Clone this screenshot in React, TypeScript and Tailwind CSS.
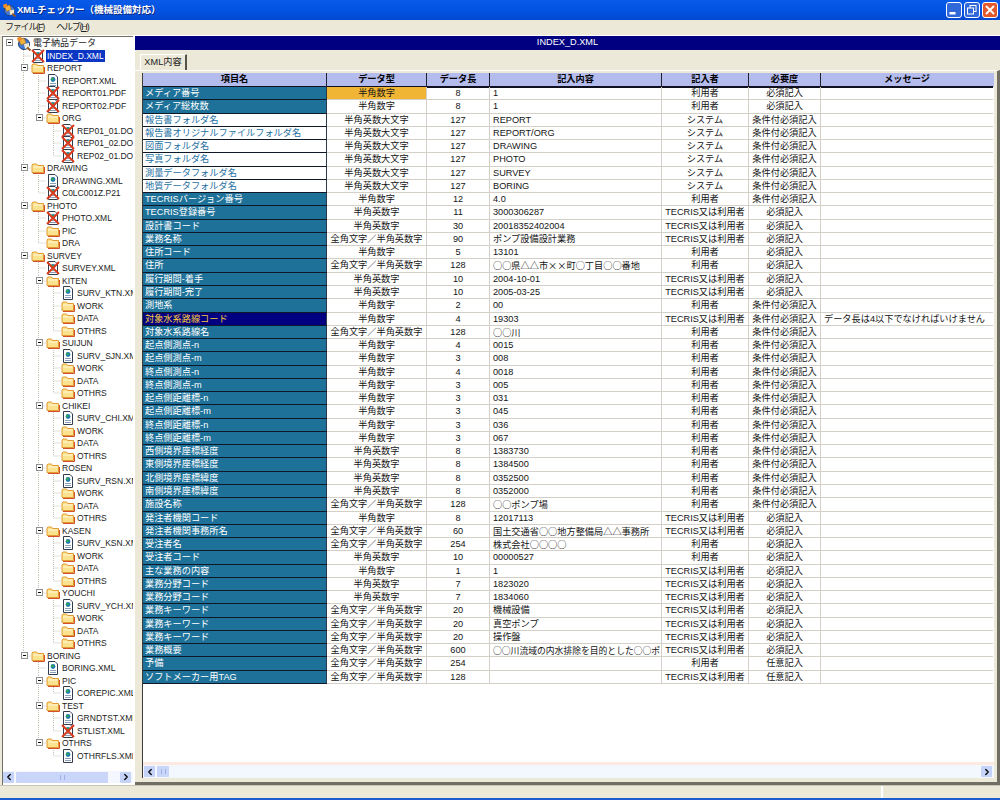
import { ChevronLeft, ChevronRight } from "lucide-react";

const H = "半角数字";
const A = "半角英数字";
const U = "半角英数大文字";
const Z = "全角文字／半角英数字";
const ME = "利用者";
const SYS = "システム";
const TEC = "TECRIS又は利用者";
const REQ = "必須記入";
const CON = "条件付必須記入";
const OPT = "任意記入";

type Row = [string, string, string, string, string, string, string?];

const rows: Row[] = [
  ["メディア番号", H, "8", "1", ME, REQ],
  ["メディア総枚数", H, "8", "1", ME, REQ],
  ["報告書フォルダ名", U, "127", "REPORT", SYS, CON],
  ["報告書オリジナルファイルフォルダ名", U, "127", "REPORT/ORG", SYS, CON],
  ["図面フォルダ名", U, "127", "DRAWING", SYS, CON],
  ["写真フォルダ名", U, "127", "PHOTO", SYS, CON],
  ["測量データフォルダ名", U, "127", "SURVEY", SYS, CON],
  ["地質データフォルダ名", U, "127", "BORING", SYS, CON],
  ["TECRISバージョン番号", H, "12", "4.0", ME, CON],
  ["TECRIS登録番号", A, "11", "3000306287", TEC, REQ],
  ["設計書コード", A, "30", "20018352402004", TEC, REQ],
  ["業務名称", Z, "90", "ポンプ設備設計業務", TEC, REQ],
  ["住所コード", H, "5", "13101", ME, REQ],
  ["住所", Z, "128", "○○県△△市××町○丁目○○番地", ME, REQ],
  ["履行期間-着手", A, "10", "2004-10-01", TEC, REQ],
  ["履行期間-完了", A, "10", "2005-03-25", TEC, REQ],
  ["測地系", H, "2", "00", ME, CON],
  ["対象水系路線コード", H, "4", "19303", TEC, CON, "データ長は4以下でなければいけません"],
  ["対象水系路線名", Z, "128", "○○川", ME, CON],
  ["起点側測点-n", H, "4", "0015", ME, CON],
  ["起点側測点-m", H, "3", "008", ME, CON],
  ["終点側測点-n", H, "4", "0018", ME, CON],
  ["終点側測点-m", H, "3", "005", ME, CON],
  ["起点側距離標-n", H, "3", "031", ME, CON],
  ["起点側距離標-m", H, "3", "045", ME, CON],
  ["終点側距離標-n", H, "3", "036", ME, CON],
  ["終点側距離標-m", H, "3", "067", ME, CON],
  ["西側境界座標経度", A, "8", "1383730", ME, CON],
  ["東側境界座標経度", A, "8", "1384500", ME, CON],
  ["北側境界座標緯度", A, "8", "0352500", ME, CON],
  ["南側境界座標緯度", A, "8", "0352000", ME, CON],
  ["施設名称", Z, "128", "○○ポンプ場", ME, CON],
  ["発注者機関コード", H, "8", "12017113", TEC, REQ],
  ["発注者機関事務所名", Z, "60", "国土交通省○○地方整備局△△事務所", TEC, REQ],
  ["受注者名", Z, "254", "株式会社○○○○", ME, REQ],
  ["受注者コード", A, "10", "00000527", ME, REQ],
  ["主な業務の内容", H, "1", "1", TEC, REQ],
  ["業務分野コード", A, "7", "1823020", TEC, REQ],
  ["業務分野コード", A, "7", "1834060", TEC, REQ],
  ["業務キーワード", Z, "20", "機械設備", TEC, REQ],
  ["業務キーワード", Z, "20", "真空ポンプ", TEC, REQ],
  ["業務キーワード", Z, "20", "操作盤", TEC, REQ],
  ["業務概要", Z, "600", "○○川流域の内水排除を目的とした○○ポ", TEC, REQ],
  ["予備", Z, "254", "", ME, OPT],
  ["ソフトメーカー用TAG", Z, "128", "", TEC, OPT],
];

// level, label, kind: r root, f folder, d doc, x doc with red cross
type Node = [number, string, "r" | "f" | "d" | "x"];

const surveyDirs = (name: string, file: string): Node[] => [
  [2, name, "f"],
  [3, file, "d"],
  [3, "WORK", "f"],
  [3, "DATA", "f"],
  [3, "OTHRS", "f"],
];

const nodes: Node[] = [
  [0, "電子納品データ", "r"],
  [1, "INDEX_D.XML", "x"],
  [1, "REPORT", "f"],
  [2, "REPORT.XML", "d"],
  [2, "REPORT01.PDF", "x"],
  [2, "REPORT02.PDF", "x"],
  [2, "ORG", "f"],
  [3, "REP01_01.DOC", "x"],
  [3, "REP01_02.DOC", "x"],
  [3, "REP02_01.DOC", "x"],
  [1, "DRAWING", "f"],
  [2, "DRAWING.XML", "d"],
  [2, "C0LC001Z.P21", "x"],
  [1, "PHOTO", "f"],
  [2, "PHOTO.XML", "x"],
  [2, "PIC", "f"],
  [2, "DRA", "f"],
  [1, "SURVEY", "f"],
  [2, "SURVEY.XML", "x"],
  ...surveyDirs("KITEN", "SURV_KTN.XML"),
  ...surveyDirs("SUIJUN", "SURV_SJN.XML"),
  ...surveyDirs("CHIKEI", "SURV_CHI.XML"),
  ...surveyDirs("ROSEN", "SURV_RSN.XML"),
  ...surveyDirs("KASEN", "SURV_KSN.XML"),
  ...surveyDirs("YOUCHI", "SURV_YCH.XML"),
  [1, "BORING", "f"],
  [2, "BORING.XML", "d"],
  [2, "PIC", "f"],
  [3, "COREPIC.XML", "d"],
  [2, "TEST", "f"],
  [3, "GRNDTST.XML", "d"],
  [3, "STLIST.XML", "x"],
  [2, "OTHRS", "f"],
  [3, "OTHRFLS.XML", "d"],
];

const hasChildren = (i: number) => nodes[i + 1] !== undefined && nodes[i + 1][0] > nodes[i][0];

// is there a later row at this level before the branch closes
const hasLaterSibling = (i: number, level: number) => {
  for (let j = i + 1; j < nodes.length; j++) {
    if (nodes[j][0] < level) return false;
    if (nodes[j][0] === level) return true;
  }
  return false;
};

function Guides({ i }: { i: number }) {
  const level = nodes[i][0];
  const lines = [];
  for (let d = 1; d <= level; d++) {
    const x = 5.5 + 15 * d;
    if (d < level && hasLaterSibling(i, d)) {
      lines.push(<line key={d} x1={x} x2={x} y1={0} y2={12.5} />);
    }
    if (d === level) {
      lines.push(<line key={d} x1={x} x2={x} y1={0} y2={hasLaterSibling(i, d) ? 12.5 : 6} />);
      lines.push(<line key="h" x1={x} x2={x + 8} y1={6} y2={6} />);
    }
  }
  return (
    <svg className="absolute left-0 top-0" width={130} height={13} stroke="#c4c1b4" strokeDasharray="1 1">
      {lines}
    </svg>
  );
}

function FolderIcon() {
  return (
    <svg width={14} height={12} viewBox="0 0 14 12" className="shrink-0">
      <path d="M1 3 L1 10.5 L12.5 10.5 L12.5 3.5 L6.5 3.5 L5.5 2 L2 2 Z" fill="#fbe28e" stroke="#e39a30" strokeWidth="1" />
      <path d="M2 5 L11.5 5" stroke="#fff8dc" strokeWidth="1" />
      <path d="M2 11.5 L13.5 11.5 L13.5 5" fill="none" stroke="#d2502a" strokeWidth="1" />
    </svg>
  );
}

function DocIcon({ cross }: { cross?: boolean }) {
  return (
    <svg width={14} height={14} viewBox="0 0 14 14" className="shrink-0">
      <path d="M2.5 0.5 H9 L11.5 3 V13.5 H2.5 Z" fill="#ffffff" stroke="#333c4c" strokeWidth="1" />
      <circle cx="7" cy="5.5" r="2.4" fill="#1f7ab0" />
      <circle cx="6.4" cy="5" r="1.2" fill="#2fae4a" />
      <path d="M4 9.5 H10 M4 11.5 H10" stroke="#8aa0b8" strokeWidth="1" />
      {cross ? <path d="M1 1 L13 13 M13 1 L1 13" stroke="#dc3a1c" strokeWidth="2" /> : null}
    </svg>
  );
}

function RootIcon({ size = 15 }: { size?: number }) {
  return (
    <svg width={size} height={size} viewBox="0 0 15 15" className="shrink-0">
      <circle cx="8" cy="8" r="5.5" fill="#3f78d8" stroke="#22406f" strokeWidth="1" />
      <path d="M3 4 L8 2 L10 7 L5 9 Z" fill="#f3b33c" stroke="#a8661c" strokeWidth="0.6" />
      <path d="M8 8 L13 7 L13 11 L9 13 Z" fill="#efe8cc" />
      <path d="M1 2 L5 0.5 L6 4 L2 5.5 Z" fill="#f08a24" />
      <path d="M11 11.5 L14.5 14.5" stroke="#9a5a20" strokeWidth="2" />
    </svg>
  );
}

function TreeRow({ i }: { i: number }) {
  const [level, label, kind] = nodes[i];
  const selected = i === 1;
  const boxLeft = 3 + 15 * level;
  const iconLeft = 13 + 15 * level;
  return (
    <div className="relative flex h-[12.5px] items-center whitespace-nowrap">
      <Guides i={i} />
      {hasChildren(i) ? (
        <span
          className="absolute top-[2px] flex h-[7px] w-[7px] items-center justify-center border border-[#8e8f8f] bg-white"
          style={{ left: boxLeft }}
        >
          <span className="h-px w-[3px] bg-black" />
        </span>
      ) : null}
      <span className="relative flex items-center" style={{ marginLeft: iconLeft }}>
        {kind === "r" ? <RootIcon /> : kind === "f" ? <FolderIcon /> : <DocIcon cross={kind === "x"} />}
        <span
          className={
            selected
              ? "ml-px bg-[#0a36c4] px-px leading-[12px] text-white"
              : kind === "r"
                ? "ml-[2px] text-[9px] leading-[12px] text-[#1c1c1c]"
                : "ml-[2px] leading-[12px] text-[#1c1c1c]"
          }
        >
          {label}
        </span>
      </span>
    </div>
  );
}

function ScrollButton({ dir }: { dir: "l" | "r" }) {
  return (
    <span className="flex h-[11px] w-[11px] shrink-0 items-center justify-center rounded-[1px] bg-[#c5d3f8] text-black">
      {dir === "l" ? <ChevronLeft size={10} strokeWidth={3} /> : <ChevronRight size={10} strokeWidth={3} />}
    </span>
  );
}

function Tree() {
  return (
    <div className="flex h-full w-[131px] flex-col border-l border-t border-[#716f64] bg-white pb-[2px] text-[8.5px]">
      <div className="min-h-0 flex-1 overflow-hidden">
        {nodes.map((_, i) => (
          <TreeRow key={i} i={i} />
        ))}
      </div>
      <div className="flex h-[12px] items-center gap-[2px] bg-[#f4f7fe]">
        <ScrollButton dir="l" />
        <span className="flex h-[11px] w-[92px] items-center justify-center rounded-[1px] bg-[#c9d6fa]">
          <span className="h-[5px] w-[5px] border-x border-[#9fb2e4]" />
        </span>
        <span className="w-[8px]" />
        <ScrollButton dir="r" />
      </div>
    </div>
  );
}

const GRID = "grid grid-cols-[184px_100px_63px_172px_87px_72px_172px]";
const HEADS = ["項目名", "データ型", "データ長", "記入内容", "記入者", "必要度", "メッセージ"];
// cells keep the row height so the taller line box can't push the next row over the border
const CELL = "h-[13.27px] overflow-hidden whitespace-nowrap border-b";
const DATA = `${CELL} border-r border-[#d4d0c8]`;

function labelClass(i: number) {
  if (i >= 2 && i <= 7) return "bg-white text-[#1d6f9f]";
  if (i === 17) return "bg-[#000080] text-[#f6c83c]";
  return "bg-[#1e7299] text-white";
}

function valueClass(value: string) {
  if (value.length >= 19) return "font-['Noto_Sans_CJK_JP',sans-serif] text-[8.8px]";
  if (/[○△×]/.test(value)) return "font-['Noto_Sans_CJK_JP',sans-serif]";
  return "";
}

function DataTable() {
  return (
    <div className="flex h-[705px] w-[852px] flex-col border-l border-[#3c3c3c] bg-white">
      <div className={`${GRID} h-[14px] bg-[#b4bcee] font-bold leading-[13px] text-black`}>
        {HEADS.map((h, i) => (
          <div key={h} className={`border-b-2 border-b-[#101020] text-center ${i < 6 ? "border-r border-r-[#202030]" : ""}`}>
            {h}
          </div>
        ))}
      </div>
      {rows.map((r, i) => {
        const [label, type, len, value, who, need, msg] = r;
        return (
          <div key={i} className={`${GRID} h-[13.27px] leading-[13.5px] text-[#141414]`}>
            <div className={`${CELL} border-r border-b-[#101828] border-r-[#2a3a4a] pl-[2px] ${labelClass(i)}`}>{label}</div>
            <div className={`${DATA} text-center ${i === 0 ? "bg-[#f0b535]" : ""}`}>{type}</div>
            <div className={`${DATA} text-center`}>{len}</div>
            <div className={`${DATA} pl-[3px] ${valueClass(value)}`}>{value}</div>
            <div className={`${DATA} text-center`}>{who}</div>
            <div className={`${DATA} text-center`}>{need}</div>
            <div className={`${CELL} border-[#d4d0c8] pl-[3px]`}>{msg}</div>
          </div>
        );
      })}
      <div className="flex-1" />
      <div className="h-[3px] bg-[#fbe9e2]" />
      <div className="flex h-[13px] items-center gap-[2px] bg-[#f2f8fe] pl-[1px] pr-[2px]">
        <ScrollButton dir="l" />
        <span className="flex h-[11px] w-[12px] items-center justify-center rounded-[1px] bg-[#c9d6fa]">
          <span className="h-[5px] w-[5px] border-x border-[#9fb2e4]" />
        </span>
        <span className="flex-1" />
        <ScrollButton dir="r" />
      </div>
    </div>
  );
}

function WinButtons() {
  return (
    <div className="flex gap-[2px]">
      <svg width={16} height={16} viewBox="0 0 16 16">
        <rect x="0.5" y="0.5" width="15" height="15" rx="2.5" fill="#2f68d8" stroke="#ffffff" />
        <rect x="3.5" y="10" width="6" height="2.5" fill="#ffffff" />
      </svg>
      <svg width={16} height={16} viewBox="0 0 16 16">
        <rect x="0.5" y="0.5" width="15" height="15" rx="2.5" fill="#2f68d8" stroke="#ffffff" />
        <rect x="6" y="3.5" width="6" height="6" fill="none" stroke="#ffffff" />
        <rect x="3.5" y="6" width="6" height="6" fill="#2f68d8" stroke="#ffffff" />
      </svg>
      <svg width={16} height={16} viewBox="0 0 16 16">
        <rect x="0.5" y="0.5" width="15" height="15" rx="2.5" fill="#e2592c" stroke="#ffffff" />
        <path d="M4 4 L12 12 M12 4 L4 12" stroke="#ffffff" strokeWidth="2" />
      </svg>
    </div>
  );
}

export default function App() {
  return (
    <div className="flex h-[800px] w-[1000px] flex-col overflow-hidden bg-[#ece9d8] font-['Liberation_Sans','Noto_Sans_CJK_JP',sans-serif] text-[9.2px]">
      {/* タイトルバー */}
      <div className="flex h-[20px] shrink-0 items-center bg-gradient-to-b from-[#0a5ae8] via-[#0353e2] to-[#0348d0] pl-[2px] pr-[2px]">
        <RootIcon size={14} />
        <span className="ml-px flex-1 text-[9.5px] font-bold text-white [text-shadow:1px_1px_0_#0a2a80]">
          XMLチェッカー（機械設備対応）
        </span>
        <WinButtons />
      </div>

      {/* メニュー */}
      <div className="flex h-[16px] shrink-0 items-center gap-[12px] border-b border-white pl-[5px] text-[9px] tracking-[-1.2px] text-[#1c1c1c]">
        <span>
          ファイル(<span className="underline">F</span>)
        </span>
        <span>
          ヘルプ(<span className="underline">H</span>)
        </span>
      </div>

      <div className="flex min-h-0 flex-1">
        <div className="w-[2px] shrink-0" />
        <Tree />
        <div className="w-[2px] shrink-0 bg-white" />

        <div className="flex w-[865px] flex-col">
          <div className="flex h-[14px] shrink-0 items-center justify-center bg-[#000080] leading-none text-white">
            INDEX_D.XML
          </div>
          <div className="flex items-end pl-[5px] pt-[4px]">
            <div className="flex h-[16px] w-[47px] items-center justify-center rounded-t-[1px] border-l border-r-2 border-t border-l-white border-r-[#55544c] border-t-white text-[#1c1c1c]">
              XML内容
            </div>
          </div>
          <div className="flex flex-1 border-b-[3px] border-r-[3px] border-t border-b-[#716f64] border-r-[#716f64] border-t-white pl-[7px] pt-[2px]">
            <DataTable />
          </div>
        </div>
      </div>

      {/* ステータスバー */}
      <div className="flex h-[13px] shrink-0 border-t border-[#c8c5b4]">
        <div className="w-[883px] border-r-2 border-r-white" />
        <div className="flex-1" />
      </div>
      <div className="h-[2px] shrink-0 bg-[#1c5ad0]" />
    </div>
  );
}
